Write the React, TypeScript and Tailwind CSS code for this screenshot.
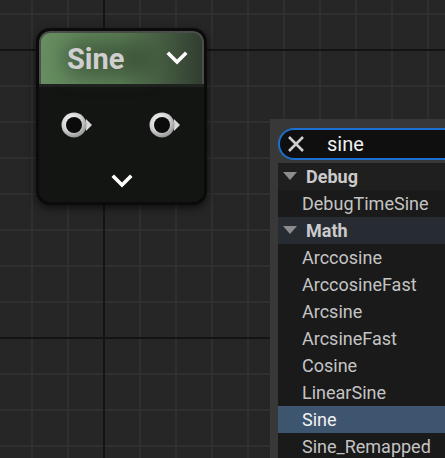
import { Fragment } from 'react';

const MINOR_X = Array.from({ length: 14 }, (_, i) => 31 + i * 36);
const MINOR_Y = Array.from({ length: 14 }, (_, i) => 13 + i * 36);

const ROWS: { label: string; kind: 'cat' | 'item'; active?: boolean }[] = [
    { label: 'Debug', kind: 'cat' },
    { label: 'DebugTimeSine', kind: 'item' },
    { label: 'Math', kind: 'cat', active: true },
    { label: 'Arccosine', kind: 'item' },
    { label: 'ArccosineFast', kind: 'item' },
    { label: 'Arcsine', kind: 'item' },
    { label: 'ArcsineFast', kind: 'item' },
    { label: 'Cosine', kind: 'item' },
    { label: 'LinearSine', kind: 'item' },
    { label: 'Sine', kind: 'item', active: true },
    { label: 'Sine_Remapped', kind: 'item' },
];

function Chevron({ className }: { className?: string }) {
    return (
        <svg width="22" height="15" viewBox="0 0 22 15" className={className}>
            <path
                d="M3 3 L11 11 L19 3"
                fill="none"
                stroke="#ffffff"
                strokeWidth="3.6"
                strokeLinecap="square"
            />
        </svg>
    );
}

function Pin() {
    return (
        <svg width="34" height="28" viewBox="0 0 34 28">
            <defs>
                <radialGradient id="ring" cx="0.4" cy="0.35" r="0.7">
                    <stop offset="0" stopColor="#ffffff" />
                    <stop offset="0.6" stopColor="#cfcfcf" />
                    <stop offset="1" stopColor="#8a8a8a" />
                </radialGradient>
            </defs>
            <path d="M26 8 L32 14 L26 20 Z" fill="#d8d8d8" />
            <circle cx="14" cy="14" r="12.5" fill="url(#ring)" />
            <circle cx="14" cy="14" r="8" fill="#0b0b0b" />
        </svg>
    );
}

export default function App() {
    return (
        <div className="relative h-[458px] w-[445px] overflow-hidden bg-[#262626] font-['Roboto',sans-serif]">
            {/* graph grid */}
            <svg className="absolute inset-0" width="445" height="458">
                {MINOR_X.map((x) => (
                    <rect key={'x' + x} x={x} y={0} width={2} height={458} fill="#2f2f2f" />
                ))}
                {MINOR_Y.map((y) => (
                    <rect key={'y' + y} x={0} y={y} width={445} height={2} fill="#2f2f2f" />
                ))}
                <rect x={103} y={0} width={2} height={458} fill="#141414" />
                <rect x={0} y={49} width={445} height={2} fill="#141414" />
                <rect x={0} y={337} width={445} height={2} fill="#141414" />
            </svg>

            {/* Sine node */}
            <div className="absolute top-[28px] left-[36px] flex h-[177px] w-[171px] flex-col overflow-hidden rounded-[14px] border-[3px] border-[#0b0b0b] bg-[#131512] shadow-[0_3px_8px_rgba(0,0,0,0.6)]">
                <div className="relative flex h-[53px] shrink-0 items-center rounded-t-[11px] border-t-2 border-r-2 border-l-2 border-[#4a4f49] bg-linear-to-r from-[#678e61] via-[#5b7f55] to-[#313d30]">
                    <div className="absolute top-[8px] left-[22px] h-[36px] w-[90px] rounded-full bg-[#2a3a28] opacity-50 blur-[10px]" />
                    <span className="relative mt-[2px] ml-[26px] text-[29px] leading-none font-bold text-[#cfcfcf]">
                        Sine
                    </span>
                    <Chevron className="absolute top-[18px] right-[14px]" />
                </div>
                <div className="h-[3px] shrink-0 bg-[#1f221e]" />
                <div className="flex flex-1 flex-col">
                    <div className="mt-[24px] flex justify-between pr-[22px] pl-[21px]">
                        <Pin />
                        <Pin />
                    </div>
                    <div className="mt-[35px] flex justify-center">
                        <Chevron />
                    </div>
                </div>
            </div>

            {/* search menu */}
            <div className="absolute top-[119px] left-[270px] flex h-[339px] w-[175px] flex-col overflow-hidden bg-[#383838] pt-[9px] pl-[8px]">
                <div className="flex h-[32px] shrink-0 items-center rounded-l-full border-2 border-r-0 border-[#1d6fd0] bg-[#0f0f0f] pl-[7px]">
                    <svg width="18" height="18" viewBox="0 0 18 18">
                        <path d="M2 2 L16 16 M16 2 L2 16" stroke="#cfcfcf" strokeWidth="2.6" />
                    </svg>
                    <span className="ml-[22px] text-[20px] leading-none text-[#f0f0f0]">sine</span>
                </div>
                <div className="mt-[3px] shrink-0 bg-[#1a1a1a]">
                    {ROWS.map((r) => (
                        <Fragment key={r.label}>
                            <div
                                className={
                                    'flex h-[27px] items-center ' +
                                    (r.kind === 'cat'
                                        ? r.active
                                            ? 'bg-[#272c33]'
                                            : 'bg-[#1f1f1f]'
                                        : r.active
                                          ? 'bg-[#3e556f]'
                                          : '')
                                }
                            >
                                {r.kind === 'cat' ? (
                                    <>
                                        <svg width="14" height="9" viewBox="0 0 14 9" className="mr-[9px] ml-[5px]">
                                            <path d="M0 0 L14 0 L7 8 Z" fill="#8c8c8c" />
                                        </svg>
                                        <span className="text-[18px] leading-none font-bold text-[#cbcbcb]">
                                            {r.label}
                                        </span>
                                    </>
                                ) : (
                                    <span
                                        className={
                                            'ml-[24px] text-[18px] leading-none ' +
                                            (r.active ? 'text-[#f2f2f2]' : 'text-[#c4c4c4]')
                                        }
                                    >
                                        {r.label}
                                    </span>
                                )}
                            </div>
                        </Fragment>
                    ))}
                </div>
            </div>
        </div>
    );
}
